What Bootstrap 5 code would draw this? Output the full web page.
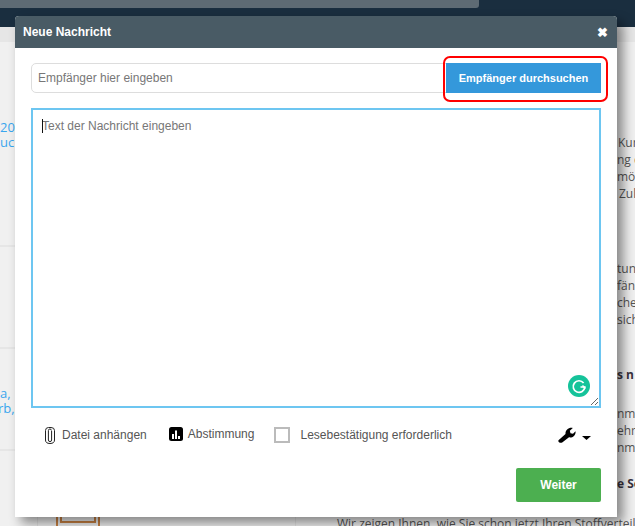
<!DOCTYPE html>
<html lang="de">
<head>
<meta charset="utf-8">
<title>Neue Nachricht</title>
<link href="https://cdn.jsdelivr.net/npm/bootstrap@5.3.0/dist/css/bootstrap.min.css" rel="stylesheet">
<style>
html,body{height:100%;margin:0;overflow:hidden}
body{font-family:"Liberation Sans",Arial,sans-serif;background:#f0f0f0;position:relative;width:635px;height:526px}
.bg-top{height:8px;background:#1a2e3f}
.bg-top-in{height:8px;width:479px;background:#5e6b74;border-bottom-right-radius:3px}
.bg-dark-band{height:19px;background:#1a2e3f}
.bg-grey-band{height:15px;background:#e6e6e6}
.frag{position:absolute;font-family:"Open Sans",sans-serif;font-size:12px;line-height:16px;white-space:nowrap;color:#555}
.frag-link{color:#3aa6ee;font-size:13px;line-height:14px}
.frag-b{font-weight:700;color:#3a3340}
.rule{position:absolute;left:0;width:16px;height:2px;background:#e6e6e6}
.thumb-out{position:absolute;left:56px;top:505px;width:44px;height:21px;border-left:2px solid #c98244;border-right:2px solid #c98244}
.thumb-in{position:absolute;left:2px;right:2px;top:0;height:18px;border:2px solid #c98244;border-top:0}
.side-line{position:absolute;top:517px;width:1px;height:9px;background:#e3e3e3}
.msg-dialog{position:absolute;left:15px;top:16px;width:602px;height:501px;border:0;border-radius:4px 4px 0 0;box-shadow:6px 6px 12px rgba(0,0,0,.45);background:#fff}
.msg-head{height:32px;background:#495b65;border-radius:4px 4px 0 0;border:0;padding:0 8px;color:#fff}
.msg-title{font-size:12px;font-weight:700;line-height:1;margin:0}
.msg-close{font-size:13px;line-height:1;font-weight:700;color:#fff;background:none;border:0;padding:0;margin-top:1px;margin-right:1px}
.msg-body{padding:15px 16px 0;flex:1 1 auto;display:flex;flex-direction:column}
.rcpt-wrap{height:30px}
.rcpt-input{height:30px;font-size:12px;padding:0 6px;border:1px solid #ddd;border-radius:5px 0 0 5px;color:#777;box-shadow:none}
.rcpt-input::placeholder,.msg-text::placeholder{color:#777;opacity:1}
.rcpt-btn{height:30px;width:155px;flex:none;background:#3498db;border:0;border-radius:0;color:#fff;font-size:11px;font-weight:700;padding:0}
.red-mark{position:absolute;left:443px;top:56px;width:165px;height:46px;border:2px solid #f00;border-radius:7px;pointer-events:none}
.msg-text-wrap{position:relative;margin-top:15px;height:300px}
.msg-text{display:block;width:100%;height:100%;border:2px solid #6dc6f1;border-radius:0;padding:8px 9px;font-size:12px;line-height:17px;color:#777;outline:0;box-shadow:none;resize:both}
.caret-mark{position:absolute;left:11px;top:11px;width:1px;height:14px;background:#111}
.gram{position:absolute;right:11px;bottom:11px;width:22px;height:22px}
.tools{margin-top:17px;height:20px;font-size:12px;color:#555;padding-left:13px;position:relative}
.tool-item{display:flex;align-items:center;color:#555;white-space:nowrap}
.tool-check{width:16px;height:16px;border:2px solid #bbb;flex:none}
.msg-foot{height:34px;margin-top:23px;display:flex;justify-content:flex-end;margin-bottom:15px}
.next-btn{width:85px;height:34px;background:#4caf50;border:0;border-radius:2px;color:#fff;font-size:12px;font-weight:700;padding:0}
.clip-ic{margin-right:6px}
.poll-ic{margin-right:5px}
</style>
</head>
<body>
<div class="bg-top"><div class="bg-top-in"></div></div>
<div class="bg-dark-band"></div>
<div class="bg-grey-band"></div>

<div class="frag frag-link" style="left:0;top:120px">20</div>
<div class="frag frag-link" style="left:0;top:135px">uc</div>
<div class="rule" style="top:245px"></div>
<div class="rule" style="top:347px"></div>
<div class="frag frag-link" style="left:0;top:386px">a,</div>
<div class="frag frag-link" style="left:-2px;top:401px">rb,</div>
<div class="rule" style="top:449px"></div>
<div class="thumb-out"><div class="thumb-in"></div></div>
<div class="side-line" style="left:37px"></div>
<div class="side-line" style="left:295px"></div>

<div class="frag" style="left:618px;top:135px">Kur</div>
<div class="frag" style="left:617px;top:152px">ng d</div>
<div class="frag" style="left:617px;top:169px">möc</div>
<div class="frag" style="left:619px;top:186px">Zul</div>
<div class="frag" style="left:617px;top:261px">tun</div>
<div class="frag" style="left:617px;top:278px">fän</div>
<div class="frag" style="left:617px;top:295px">che</div>
<div class="frag" style="left:617px;top:312px">sich</div>
<div class="frag frag-b" style="left:617px;top:367px">s n</div>
<div class="frag" style="left:617px;top:406px">nme</div>
<div class="frag" style="left:617px;top:423px">ehr</div>
<div class="frag" style="left:617px;top:440px">nme</div>
<div class="frag frag-b" style="left:617px;top:476px">e So</div>
<div class="frag" style="left:337px;top:516px">Wir zeigen Ihnen, wie Sie schon jetzt Ihren Stoffverteil</div>

<div class="modal-content msg-dialog">
  <div class="modal-header msg-head">
    <h5 class="msg-title">Neue Nachricht</h5>
    <button type="button" class="msg-close ms-auto" aria-label="Schließen">✖</button>
  </div>
  <div class="msg-body">
    <div class="input-group flex-nowrap rcpt-wrap">
      <input type="text" class="form-control rcpt-input" placeholder="Empfänger hier eingeben">
      <button type="button" class="btn rcpt-btn">Empfänger durchsuchen</button>
    </div>
    <div class="msg-text-wrap">
      <textarea class="form-control msg-text" placeholder="Text der Nachricht eingeben"></textarea>
      <span class="caret-mark"></span>
      <svg class="gram" viewBox="0 0 22 22" aria-hidden="true"><circle cx="11" cy="11" r="11" fill="#15c39a"/><path d="M15.600 8A5.800 5.800 0 1 0 16.800 12H12.500" fill="none" stroke="#fff" stroke-width="1.700"/><path d="M14.500 10.500l3 3" stroke="#fff" stroke-width="1.500"/></svg>
    </div>
    <div class="d-flex align-items-center tools">
      <span class="tool-item"><svg width="12" height="17" viewBox="0 0 12 17" class="clip-ic" aria-hidden="true"><path d="M7.600 4v9a1.600 1.600 0 0 1-3.200 0V3.500a1.500 1.500 0 0 1 3 0M10.500 3.500v9.500a4.500 3.500 0 0 1-9 0V3.500a3 3 0 0 1 3-3h2.500a3.500 3 0 0 1 3.500 3" fill="none" stroke="#222" stroke-width="1"/></svg>Datei anhängen</span>
      <span class="tool-item" style="margin-left:22px;margin-top:-2px"><svg width="14" height="14" viewBox="0 0 14 14" class="poll-ic" aria-hidden="true"><rect width="14" height="14" rx="2.500" fill="#000"/><path d="M3 7h2v5H3zM6 3.500h2V12H6zM9 9h2v3H9z" fill="#fff"/></svg><span>Abstimmung</span></span>
      <span class="tool-item" style="margin-left:20px"><span class="tool-check"></span><span style="margin-left:10px">Lesebestätigung erforderlich</span></span>
      <span class="ms-auto d-flex align-items-center" style="margin-right:10px">
        <svg width="18" height="16" viewBox="0 0 18 16" aria-hidden="true"><path d="M.5 13.300 7.500 7C7.200 3.200 10.500.2 14.800 1L11.800 3.700 12.500 6.200 15 6.800 17.500 4.200C18.200 8 14.500 11.200 11 10.300L4.200 15.500C2.200 16.600-.3 15 .5 13.300Z" fill="#000"/></svg>
        <svg width="9" height="4" viewBox="0 0 9 4" style="margin-left:6px;margin-top:5px" aria-hidden="true"><path d="M0 0h9L4.500 4z" fill="#000"/></svg>
      </span>
    </div>
    <div class="msg-foot"><button type="button" class="btn next-btn">Weiter</button></div>
  </div>
</div>
<div class="red-mark"></div>
<script src="https://cdn.jsdelivr.net/npm/bootstrap@5.3.0/dist/js/bootstrap.bundle.min.js"></script>
</body>
</html>
